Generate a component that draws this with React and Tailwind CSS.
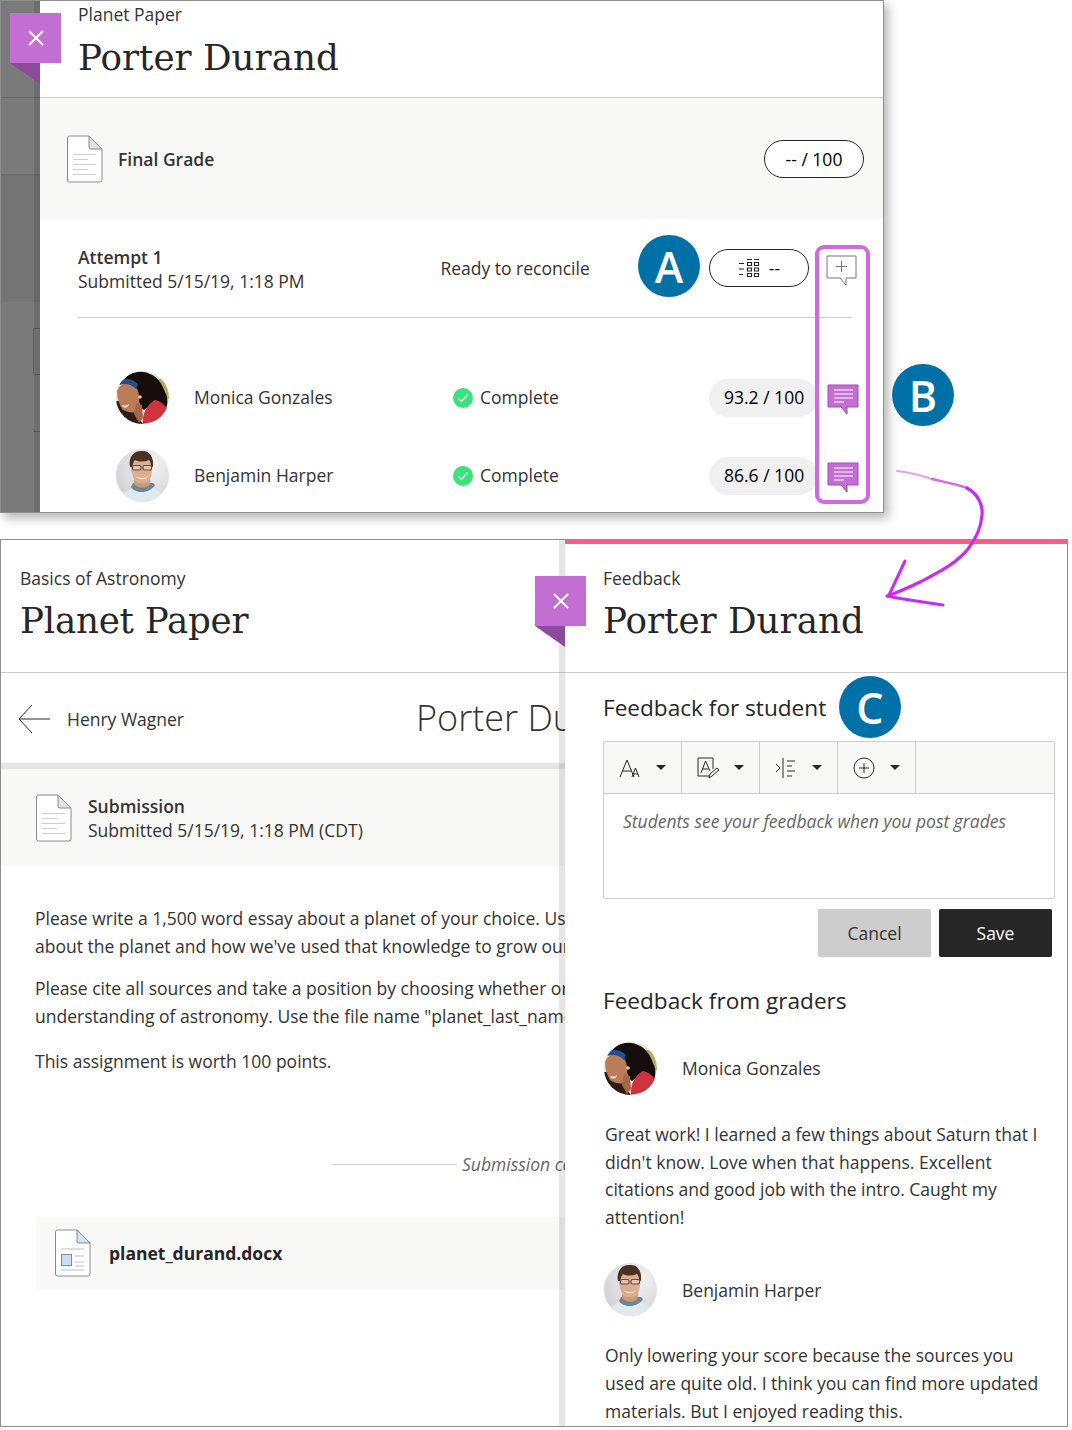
import React from 'react';

const Doc = ({ docx, className }) => (
  <svg viewBox="0 0 36 48" className={className} fill="none">
    <path d="M0.500 3a2 2 0 0 1 2-2H22l13 13v31a2 2 0 0 1-2 2H2.500a2 2 0 0 1-2-2z" fill="#fff" stroke="#8a8a8a" strokeWidth="1" />
    <path d="M22 1v11a2 2 0 0 0 2 2h11z" fill={docx ? '#cfe2f8' : '#e2e2e2'} stroke="#8a8a8a" strokeWidth="1" />
    {docx ? (
      <g>
        <path d="M6 20h23M6 41h23M20 27h9M20 33h9M20 37h9" stroke="#d4d4d4" strokeWidth="1.5" />
        <rect x="6.5" y="25.5" width="10" height="11" fill="#c7def8" stroke="#8a8a8a" strokeWidth="1" />
      </g>
    ) : (
      <path d="M6 19.500h23M6 24.500h15M6 29.500h23M6 34.500h15M6 39.500h23" stroke="#cfcfcf" strokeWidth="1" />
    )}
  </svg>
);

const CommentFilled = () => (
  <svg viewBox="0 0 32 32" className="w-[32px] h-[32px] shrink-0">
    <path d="M1 1h30v22H20v7l-6-7H1z" fill="#c26ed3" stroke="#a04db5" strokeWidth="1" />
    <path d="M7 6h19M7 10h19M7 14h19M7 18h10" stroke="#fff" strokeWidth="1.2" />
  </svg>
);

const CommentAdd = () => (
  <svg viewBox="0 0 32 32" className="w-[32px] h-[32px] shrink-0">
    <path d="M1 1h29v22H20v7l-6-7H1z" fill="#fff" stroke="#777" strokeWidth="1" />
    <path d="M15.500 6v11M10 11.500h11" stroke="#777" strokeWidth="1" />
  </svg>
);

const Check = () => (
  <svg viewBox="0 0 20 20" className="w-[20px] h-[20px] shrink-0">
    <circle cx="10" cy="10" r="10" fill="#37e37a" />
    <path d="M5.500 10.500l3 3 6-7" fill="none" stroke="#fff" strokeWidth="1.5" />
  </svg>
);

const Monica = () => (
  <svg viewBox="0 0 53 53" className="w-[53px] h-[53px] shrink-0 rounded-full">
    <defs><filter id="blurm"><feGaussianBlur stdDeviation="0.5" /></filter></defs>
    <g filter="url(#blurm)">
      <rect x="-2" y="-2" width="57" height="57" fill="#e6e2cf" />
      <rect x="42" y="8" width="12" height="20" fill="#b4ad62" />
      <path d="M-2 30h14l16 25H-2z" fill="#2a1d18" />
      <path d="M7 11C10 2 24-2 34 3c8 3 12 10 15 18 3 6 3 11 1 17-8-4-15-5-22 1-3-1-5-8-7-14-5-7-9-11-14-14z" fill="#15100e" />
      <path d="M1 20c2-6 8-9 13-8 5 2 9 7 9 13 0 7 1 13-2 16-6 1-11 0-15-3-3-5-5-11-5-18z" fill="#bb7b58" />
      <path d="M20 32l6 2 1 13-4 5-5-9z" fill="#a8664a" />
      <path d="M5 9c6-2 12-1 17 4l-2 5C15 13 10 12 3 14z" fill="#244f8f" />
      <path d="M6 34c3 1 5 1 7-1-1 4-5 5-7 1z" fill="#fff" />
      <path d="M27 53c-1-9 3-19 12-24 5 1 9 4 12 8-1 8-9 14-24 16z" fill="#d0323f" />
      <circle cx="24" cy="26" r="1.800" fill="#dcd09a" />
    </g>
  </svg>
);

const Benjamin = () => (
  <svg viewBox="0 0 53 53" className="w-[53px] h-[53px] shrink-0 rounded-full">
    <defs>
      <radialGradient id="bgb" cx="0.65" cy="0.3" r="0.8"><stop offset="0" stopColor="#f4f4f5" /><stop offset="1" stopColor="#cfcfd2" /></radialGradient>
      <filter id="blurb"><feGaussianBlur stdDeviation="0.4" /></filter>
    </defs>
    <rect width="53" height="53" fill="url(#bgb)" />
    <g filter="url(#blurb)">
      <path d="M3 53c1-8 8-12 14-14h19c6 2 12 6 14 14z" fill="#dfeaee" />
      <path d="M15 38c4 7 19 7 24-2l-2-2H17z" fill="#6b8796" />
      <path d="M18 28h16v7c-3 5-12 5-16 0z" fill="#cc9a76" />
      <path d="M15 9h21c1 9 0 19-3 23-3 3-11 3-14 0-3-4-5-14-4-23z" fill="#dcae90" />
      <path d="M14 18C12 8 18 2 25 2c8-1 13 5 12 16l-2-1c0-3-1-5-2-6-5 2-10 2-14 0-2 2-2 4-3 7z" fill="#4a3020" />
      <rect x="16.500" y="16.500" width="8.500" height="4.500" rx="1.500" fill="#e8c4ac" stroke="#55504e" strokeWidth="1.200" />
      <rect x="27" y="16.500" width="8.500" height="4.500" rx="1.500" fill="#e8c4ac" stroke="#55504e" strokeWidth="1.200" />
      <path d="M20 27c3 3 9 3 12 0-2 4-10 4-12 0z" fill="#fff" />
    </g>
  </svg>
);

const Ribbon = ({ className }) => (
  <div className={'absolute w-[51px] h-[70px] ' + className}>
    <div className="w-[51px] h-[50px] bg-[#c26ed3] flex items-center justify-center">
      <svg viewBox="0 0 20 20" className="w-[20px] h-[20px]">
        <path d="M3 3l14 14M17 3L3 17" stroke="#fff" strokeWidth="2" />
      </svg>
    </div>
    <svg viewBox="0 0 30 21" className="absolute left-0 top-[50px] w-[30px] h-[21px]">
      <path d="M0 0h30v21z" fill="#8d4a9c" />
    </svg>
  </div>
);

const Badge = ({ children, className }) => (
  <div className={'absolute w-[62px] h-[62px] rounded-full bg-[#0071a6] text-white flex items-center justify-center text-[43px] leading-none font-semibold ' + className}>
    {children}
  </div>
);

const Caret = () => (
  <svg viewBox="0 0 10 5" className="w-[10px] h-[5px]"><path d="M0 0h10L5 5z" fill="#262626" /></svg>
);

const Tool = ({ children }) => (
  <div className="w-[78px] h-full border-r border-[#cdcdcd] flex items-center pl-[14px] gap-[14px]">
    <div className="w-[24px] h-[24px] shrink-0">{children}</div>
    <Caret />
  </div>
);

const Title = ({ children, className = '' }) => (
  <h1 className={"font-['DejaVu_Serif',serif] text-[35.7px] leading-[46px] text-[#262626] font-normal whitespace-nowrap " + className}>{children}</h1>
);

const StudentRow = ({ avatar, name, grade }) => (
  <div className="flex items-center h-[53px] pl-[76px]">
    {avatar}
    <div className="ml-[25px] w-[259px] text-[#333] -mt-[1px]">{name}</div>
    <Check />
    <div className="ml-[7px] w-[229px] text-[#333] -mt-[1px]">Complete</div>
    <div className="w-[109px] h-[38px] rounded-full bg-[#f0f0f0] flex items-center pl-[15px] text-black whitespace-nowrap">{grade}</div>
    <div className="ml-[9px] mt-[4px]"><CommentFilled /></div>
  </div>
);

const Grader = ({ avatar, name, lines }) => (
  <div className="pl-[1px]">
    <div className="flex items-center h-[53px]">
      {avatar}
      <div className="ml-[25px] text-[#333]">{name}</div>
    </div>
    <p className="mt-[26px] ml-[1px] leading-[27.6px] text-[#333] whitespace-nowrap">
      {lines.map((l) => <span key={l} className="block">{l}</span>)}
    </p>
  </div>
);

export default function App() {
  return (
    <div className="relative w-[1072px] h-[1430px] bg-white overflow-hidden font-['Open_Sans',sans-serif] text-[17.5px] text-[#262626]">
      {/* Top window */}
      <div className="w-[884px] h-[513px] flex border border-[#8f8f8f] shadow-[4px_5px_10px_rgba(0,0,0,0.3)] bg-white">
        <div className="relative w-[39px] shrink-0 bg-[#7b7b7b] flex flex-col">
          <div className="h-[97px] border-b border-[#666]" />
          <div className="h-[78px] border-b-2 border-[#6e6e6e]" />
          <div className="h-[126px] bg-[#747474]" />
          <div className="mt-[26px] ml-auto w-[7px] h-[47px] rounded-l-[2px] border-y border-l border-[#5f5f5f]" />
          <div className="mt-[56px] ml-auto w-[7px] h-px bg-[#5f5f5f]" />
          <div className="absolute right-0 top-0 bottom-0 w-[6px] bg-black/10" />
        </div>
        <div className="flex-1 min-w-0 flex flex-col">
          <header className="h-[97px] shrink-0 border-b border-[#cdcdcd] pl-[38px]">
            <div className="leading-[26px] text-[#333]">Planet Paper</div>
            <Title className="mt-[8px]">Porter Durand</Title>
          </header>
          <div className="h-[121px] shrink-0 bg-[#f8f8f7] flex items-center pl-[27px] pr-[19px]">
            <Doc className="w-[36px] h-[48px] shrink-0" />
            <div className="ml-[15px] mt-[2px] font-semibold text-[#333]">Final Grade</div>
            <div className="ml-auto w-[100px] h-[38px] pt-[2px] rounded-full border border-[#262626] bg-white flex items-center justify-center text-black">-- / 100</div>
          </div>
          <div className="ml-[38px] mr-[31px] h-[99px] shrink-0 border-b border-[#cdcdcd] flex items-center">
            <div className="w-[363px] leading-[24px] mt-[1px]">
              <div className="font-semibold text-[#333]">Attempt 1</div>
              <div className="text-[#333]">Submitted 5/15/19, 1:18 PM</div>
            </div>
            <div className="w-[269px] text-[#333]">Ready to reconcile</div>
            <div className="w-[100px] h-[38px] shrink-0 rounded-full border border-[#262626] flex items-center justify-center gap-[9px]">
              <svg viewBox="0 0 22 22" className="w-[22px] h-[22px]">
                <path d="M9 2.500h5M16 2.500h5M1 6.500h5M1 12h5M1 17.500h4" stroke="#262626" strokeWidth="1.200" />
                <path d="M9.500 5.500h4v3h-4zM16.500 5.500h4v3h-4zM9.500 11h4v3h-4zM16.500 11h4v3h-4zM9.500 16.500h4v3h-4zM16.500 16.500h4v3h-4z" fill="none" stroke="#262626" strokeWidth="1.200" />
              </svg>
              <span className="text-black">--</span>
            </div>
            <div className="ml-[17px] mt-[5px] -mr-[6px]"><CommentAdd /></div>
          </div>
          <div className="pt-[53px] flex flex-col gap-[25px]">
            <StudentRow avatar={<Monica />} name="Monica Gonzales" grade="93.2 / 100" />
            <StudentRow avatar={<Benjamin />} name="Benjamin Harper" grade="86.6 / 100" />
          </div>
        </div>
      </div>

      {/* Bottom window */}
      <div className="relative mt-[26px] w-[1068px] h-[888px] flex border border-[#8f8f8f] bg-white">
        <div className="w-[564px] shrink-0 overflow-hidden">
          <header className="h-[133px] border-b border-[#cdcdcd] pl-[19px] pt-[25px]">
            <div className="leading-[26px] text-[#333]">Basics of Astronomy</div>
            <Title className="mt-[7px] tracking-[-0.25px]">Planet Paper</Title>
          </header>
          <div className="h-[90px] flex items-center pl-[17px] pt-[2px] whitespace-nowrap">
            <svg viewBox="0 0 32 30" className="w-[32px] h-[30px] shrink-0">
              <path d="M32 15H1M14 1L1 15l13 14" fill="none" stroke="#262626" strokeWidth="1" />
            </svg>
            <span className="ml-[17px] text-[#333]">Henry Wagner</span>
            <span className="ml-[232px] -mt-[2px] text-[36px] font-light text-[#333]">Porter Durand</span>
          </div>
          <div className="border-t-[6px] border-[#e5e5e5] h-[103px] bg-[#f8f8f7] flex items-center pl-[35px] whitespace-nowrap">
            <Doc className="w-[36px] h-[48px] shrink-0" />
            <div className="ml-[16px] leading-[24px] text-[#333]">
              <div className="font-semibold">Submission</div>
              <div>Submitted 5/15/19, 1:18 PM (CDT)</div>
            </div>
          </div>
          <div className="pl-[34px] pt-[38px] leading-[28px] text-[#333] whitespace-nowrap">
            <p>Please write a 1,500 word essay about a planet of your choice. Use what you've learned<br />about the planet and how we've used that knowledge to grow our understanding.</p>
            <p className="mt-[14px]">Please cite all sources and take a position by choosing whether or not it advances our<br />understanding of astronomy. Use the file name "planet_last_name" for your submission.</p>
            <p className="mt-[17px]">This assignment is worth 100 points.</p>
          </div>
          <div className="mt-[76px] pl-[331px] flex items-center whitespace-nowrap">
            <div className="w-[125px] h-px bg-[#cdcdcd] shrink-0" />
            <span className="ml-[5px] italic text-[#666]">Submission content</span>
          </div>
          <div className="mt-[40px] ml-[35px] h-[72px] bg-[#f8f8f7] flex items-center pl-[19px]">
            <Doc docx className="w-[36px] h-[48px] shrink-0" />
            <span className="ml-[18px] font-bold text-[#262626]">planet_durand.docx</span>
          </div>
        </div>
        <aside className="flex-1 min-w-0">
          <div className="h-[133px] border-t-[4px] border-[#ff5a8c] border-b border-b-[#cdcdcd] pl-[38px] pt-[21px]">
            <div className="leading-[26px] text-[#333]">Feedback</div>
            <Title className="mt-[7px]">Porter Durand</Title>
          </div>
          <div className="pl-[38px] pr-[12px]">
            <h2 className="mt-[18px] text-[22.6px] leading-[34px] text-[#262626]">Feedback for student</h2>
            <div className="mt-[16px] h-[158px] rounded-[2px] border border-[#cdcdcd]">
              <div className="h-[52px] bg-[#f8f8f7] border-b border-[#cdcdcd] flex">
                <Tool>
                  <svg viewBox="0 0 24 24" fill="none" stroke="#262626" strokeWidth="1"><path d="M2 21L9 4l7 17M4.500 15h9" /><path d="M14 21l3.500-9 3.500 9M15 18h5" /></svg>
                </Tool>
                <Tool>
                  <svg viewBox="0 0 24 24" fill="none" stroke="#262626" strokeWidth="1"><path d="M13 20H2V2h15v11" /><path d="M5 17l4.500-12L14 15M6.500 13h6" /><path d="M13 22l1-4 7-6 2 2-7 6z" /></svg>
                </Tool>
                <Tool>
                  <svg viewBox="0 0 24 24" fill="none" stroke="#262626" strokeWidth="1"><path d="M2 8l4 4-4 4M9 2v20M13 5h8M13 10h5M13 15h8M13 20h5" /></svg>
                </Tool>
                <Tool>
                  <svg viewBox="0 0 24 24" fill="none" stroke="#262626" strokeWidth="1"><circle cx="12" cy="12" r="10" /><path d="M12 7v10M7 12h10" /></svg>
                </Tool>
              </div>
              <div className="pl-[19px] pt-[13px] italic text-[#666] leading-[28px]">Students see your feedback when you post grades</div>
            </div>
            <div className="mt-[10px] flex justify-end gap-[8px] pr-[3px]">
              <button className="w-[113px] h-[48px] rounded-[2px] bg-[#cdcdcd] text-[#333]">Cancel</button>
              <button className="w-[113px] h-[48px] rounded-[2px] bg-[#262626] text-white">Save</button>
            </div>
            <h2 className="mt-[27px] text-[22.6px] leading-[34px] text-[#262626]">Feedback from graders</h2>
            <div className="mt-[24px] flex flex-col gap-[32px]">
              <Grader avatar={<Monica />} name="Monica Gonzales" lines={["Great work! I learned a few things about Saturn that I", "didn't know. Love when that happens. Excellent", "citations and good job with the intro. Caught my", "attention!"]} />
              <Grader avatar={<Benjamin />} name="Benjamin Harper" lines={["Only lowering your score because the sources you", "used are quite old. I think you can find more updated", "materials. But I enjoyed reading this."]} />
            </div>
          </div>
        </aside>
        <div className="absolute left-[558px] top-0 bottom-0 w-[6px] bg-black/10" />
      </div>

      {/* Overlays */}
      <Ribbon className="left-[10px] top-[13px]" />
      <Ribbon className="left-[535px] top-[576px]" />
      <div className="absolute left-[815px] top-[245px] w-[55px] h-[259px] rounded-[9px] border-[4px] border-[#d068df]" />
      <Badge className="left-[638px] top-[235px]">A</Badge>
      <Badge className="left-[892px] top-[364px]">B</Badge>
      <Badge className="left-[839px] top-[676px]">C</Badge>
      <svg className="absolute left-0 top-0 w-[1072px] h-[1430px] pointer-events-none" viewBox="0 0 1072 1430" fill="none">
        <path d="M897 471C908 472 920 475 932 479" stroke="#e6a0f6" strokeWidth="2" strokeLinecap="round" />
        <path d="M932 479C945 482 956 484 967 488" stroke="#d866f2" strokeWidth="2.500" strokeLinecap="round" />
        <path d="M967 488C978 494 983 505 982 515C981 528 975 540 968 549C955 565 935 574 920 582C908 588 898 592 888 596" stroke="#c92cf0" strokeWidth="3.200" strokeLinecap="round" />
        <path d="M905 561L889 595" stroke="#c92cf0" strokeWidth="3" strokeLinecap="round" />
        <path d="M887 596C905 600 925 602 943 605" stroke="#c92cf0" strokeWidth="3" strokeLinecap="round" />
      </svg>
    </div>
  );
}
